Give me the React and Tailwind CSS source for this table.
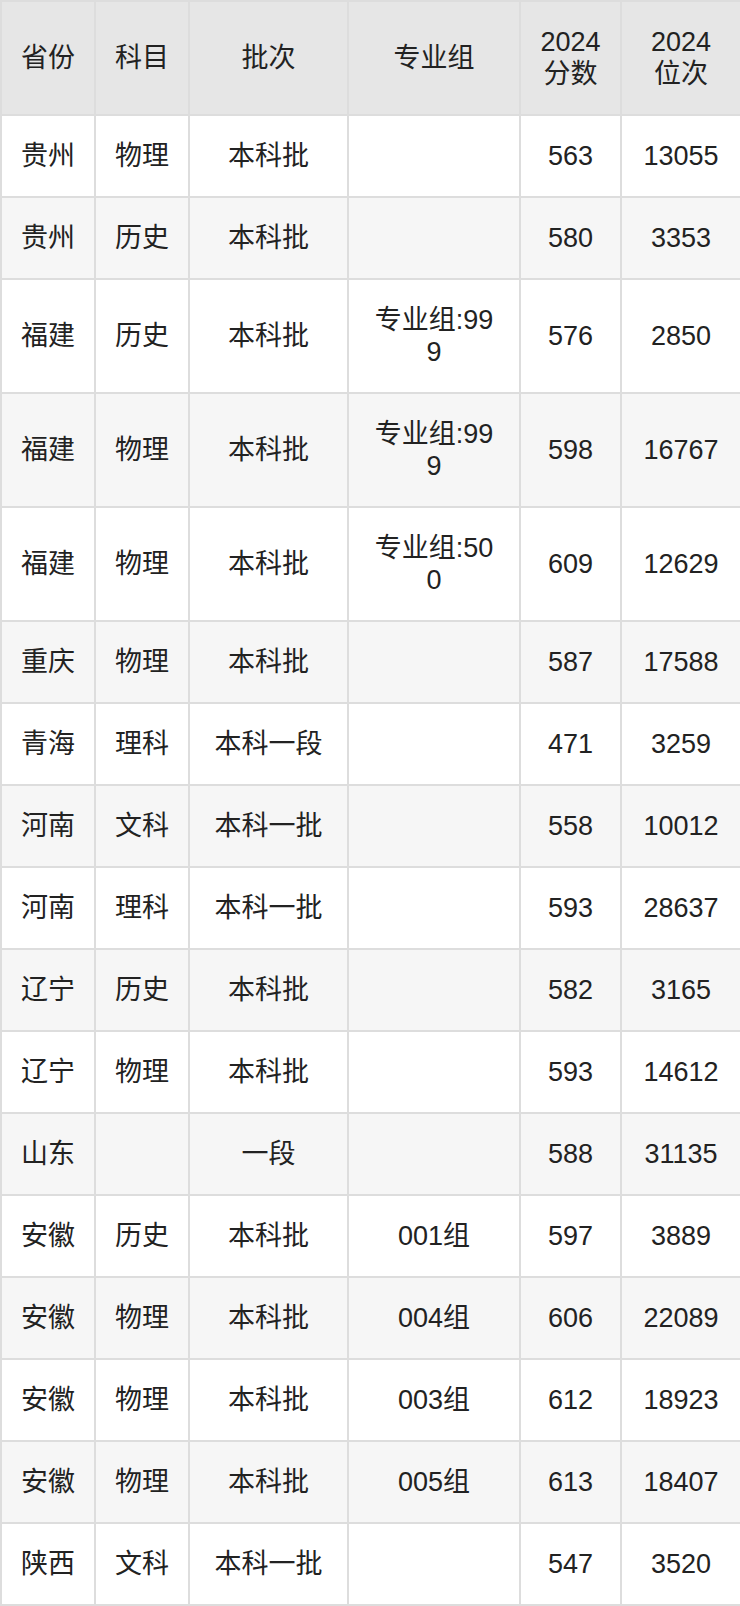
const rows = [
  ["贵州", "物理", "本科批", "", "563", "13055"],
  ["贵州", "历史", "本科批", "", "580", "3353"],
  ["福建", "历史", "本科批", "专业组:999", "576", "2850"],
  ["福建", "物理", "本科批", "专业组:999", "598", "16767"],
  ["福建", "物理", "本科批", "专业组:500", "609", "12629"],
  ["重庆", "物理", "本科批", "", "587", "17588"],
  ["青海", "理科", "本科一段", "", "471", "3259"],
  ["河南", "文科", "本科一批", "", "558", "10012"],
  ["河南", "理科", "本科一批", "", "593", "28637"],
  ["辽宁", "历史", "本科批", "", "582", "3165"],
  ["辽宁", "物理", "本科批", "", "593", "14612"],
  ["山东", "", "一段", "", "588", "31135"],
  ["安徽", "历史", "本科批", "001组", "597", "3889"],
  ["安徽", "物理", "本科批", "004组", "606", "22089"],
  ["安徽", "物理", "本科批", "003组", "612", "18923"],
  ["安徽", "物理", "本科批", "005组", "613", "18407"],
  ["陕西", "文科", "本科一批", "", "547", "3520"],
];

const headers = ["省份", "科目", "批次", "专业组", "2024分数", "2024位次"];

// the 专业组 column wraps long values mid-number, like the original
const cell = (j) =>
  "border-2 border-[#dddddd] py-[24px] text-center align-middle " +
  (j === 3 ? "px-[20px] break-all" : j === 5 ? "px-[18px]" : "px-[10px]");

export default function App() {
  return (
    <div
      className="w-[740px] bg-white text-[#222222] text-[27px] leading-[32px]"
      style={{ fontFamily: '"Liberation Sans", "Noto Sans CJK SC", sans-serif' }}
    >
      <table className="w-[740px] table-fixed border-collapse">
        <colgroup>
          <col className="w-[94px]" />
          <col className="w-[94px]" />
          <col className="w-[159px]" />
          <col className="w-[172px]" />
          <col className="w-[101px]" />
          <col className="w-[120px]" />
        </colgroup>
        <thead>
          <tr className="bg-[#e6e6e6]">
            {headers.map((h, j) => (
              <th key={h} className={`${cell(j)} font-normal`}>
                {h}
              </th>
            ))}
          </tr>
        </thead>
        <tbody>
          {rows.map((r, i) => (
            <tr key={i} className={i % 2 === 1 ? "bg-[#f6f6f6]" : "bg-white"}>
              {r.map((c, j) => (
                <td key={j} className={cell(j)}>
                  {c}
                </td>
              ))}
            </tr>
          ))}
        </tbody>
      </table>
    </div>
  );
}
